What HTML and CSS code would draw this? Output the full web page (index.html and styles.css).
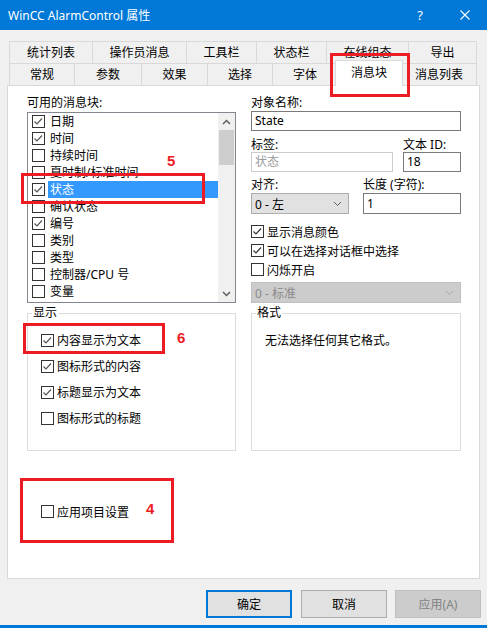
FILE: index.html
```html
<!DOCTYPE html>
<html>
<head>
<meta charset="utf-8">
<title>WinCC AlarmControl 属性</title>
<link rel="stylesheet" href="styles.css">
</head>
<body>
<div class="titlebar">
  <span class="title">WinCC AlarmControl 属性</span>
  <span class="help">?</span>
  <svg class="close" width="10" height="10" viewBox="0 0 10 10"><path d="M0.5 0.5 L9.5 9.5 M9.5 0.5 L0.5 9.5" stroke="#fff" stroke-width="1.1"/></svg>
</div>

<div class="tabs">
  <div class="tabrow">
    <div class="tab w83">统计列表</div>
    <div class="tab w94">操作员消息</div>
    <div class="tab w70">工具栏</div>
    <div class="tab w70">状态栏</div>
    <div class="tab w82">在线组态</div>
    <div class="tab w69">导出</div>
  </div>
  <div class="tabrow row2">
    <div class="tab w65">常规</div>
    <div class="tab w67">参数</div>
    <div class="tab w66">效果</div>
    <div class="tab w65">选择</div>
    <div class="tab w65">字体</div>
    <div class="tab sel">消息块</div>
    <div class="tab w76">消息列表</div>
  </div>
</div>

<div class="panel">
  <div class="cols">
    <div class="col">
      <div class="lbl">可用的消息块:</div>
      <div class="list">
        <div class="items">
          <div class="item"><svg class="cb" width="13" height="13" viewBox="0 0 13 13"><rect x="0.5" y="0.5" width="12" height="12" fill="#fff" stroke="#333"/><path d="M2.5 6.5 L5 9 L10 3.5" fill="none" stroke="#555" stroke-width="1.2"/></svg><span class="txt">日期</span></div>
          <div class="item"><svg class="cb" width="13" height="13" viewBox="0 0 13 13"><rect x="0.5" y="0.5" width="12" height="12" fill="#fff" stroke="#333"/><path d="M2.5 6.5 L5 9 L10 3.5" fill="none" stroke="#555" stroke-width="1.2"/></svg><span class="txt">时间</span></div>
          <div class="item"><svg class="cb" width="13" height="13" viewBox="0 0 13 13"><rect x="0.5" y="0.5" width="12" height="12" fill="#fff" stroke="#333"/></svg><span class="txt">持续时间</span></div>
          <div class="item"><svg class="cb" width="13" height="13" viewBox="0 0 13 13"><rect x="0.5" y="0.5" width="12" height="12" fill="#fff" stroke="#333"/></svg><span class="txt">夏时制/标准时间</span></div>
          <div class="item sel"><svg class="cb" width="13" height="13" viewBox="0 0 13 13"><rect x="0.5" y="0.5" width="12" height="12" fill="#fff" stroke="#333"/><path d="M2.5 6.5 L5 9 L10 3.5" fill="none" stroke="#555" stroke-width="1.2"/></svg><span class="txt">状态</span></div>
          <div class="item"><svg class="cb" width="13" height="13" viewBox="0 0 13 13"><rect x="0.5" y="0.5" width="12" height="12" fill="#fff" stroke="#333"/></svg><span class="txt">确认状态</span></div>
          <div class="item"><svg class="cb" width="13" height="13" viewBox="0 0 13 13"><rect x="0.5" y="0.5" width="12" height="12" fill="#fff" stroke="#333"/><path d="M2.5 6.5 L5 9 L10 3.5" fill="none" stroke="#555" stroke-width="1.2"/></svg><span class="txt">编号</span></div>
          <div class="item"><svg class="cb" width="13" height="13" viewBox="0 0 13 13"><rect x="0.5" y="0.5" width="12" height="12" fill="#fff" stroke="#333"/></svg><span class="txt">类别</span></div>
          <div class="item"><svg class="cb" width="13" height="13" viewBox="0 0 13 13"><rect x="0.5" y="0.5" width="12" height="12" fill="#fff" stroke="#333"/></svg><span class="txt">类型</span></div>
          <div class="item"><svg class="cb" width="13" height="13" viewBox="0 0 13 13"><rect x="0.5" y="0.5" width="12" height="12" fill="#fff" stroke="#333"/></svg><span class="txt">控制器/CPU 号</span></div>
          <div class="item"><svg class="cb" width="13" height="13" viewBox="0 0 13 13"><rect x="0.5" y="0.5" width="12" height="12" fill="#fff" stroke="#333"/></svg><span class="txt">变量</span></div>
        </div>
        <div class="scroll">
          <div class="arrow"><svg width="9" height="6" viewBox="0 0 9 6"><path d="M1 5 L4.5 1.5 L8 5" fill="none" stroke="#606060" stroke-width="1.5"/></svg></div>
          <div class="thumb"></div>
          <div class="track"></div>
          <div class="arrow"><svg width="9" height="6" viewBox="0 0 9 6"><path d="M1 1 L4.5 4.5 L8 1" fill="none" stroke="#606060" stroke-width="1.5"/></svg></div>
        </div>
      </div>
      <fieldset class="group">
        <legend>显示</legend>
        <div class="gbody">
          <div class="grow"><svg class="cb" width="13" height="13" viewBox="0 0 13 13"><rect x="0.5" y="0.5" width="12" height="12" fill="#fff" stroke="#333"/><path d="M2.5 6.5 L5 9 L10 3.5" fill="none" stroke="#555" stroke-width="1.2"/></svg><span class="ctxt">内容显示为文本</span></div>
          <div class="grow"><svg class="cb" width="13" height="13" viewBox="0 0 13 13"><rect x="0.5" y="0.5" width="12" height="12" fill="#fff" stroke="#333"/><path d="M2.5 6.5 L5 9 L10 3.5" fill="none" stroke="#555" stroke-width="1.2"/></svg><span class="ctxt">图标形式的内容</span></div>
          <div class="grow"><svg class="cb" width="13" height="13" viewBox="0 0 13 13"><rect x="0.5" y="0.5" width="12" height="12" fill="#fff" stroke="#333"/><path d="M2.5 6.5 L5 9 L10 3.5" fill="none" stroke="#555" stroke-width="1.2"/></svg><span class="ctxt">标题显示为文本</span></div>
          <div class="grow"><svg class="cb" width="13" height="13" viewBox="0 0 13 13"><rect x="0.5" y="0.5" width="12" height="12" fill="#fff" stroke="#333"/></svg><span class="ctxt">图标形式的标题</span></div>
        </div>
      </fieldset>
    </div>

    <div class="col">
      <div class="lbl">对象名称:</div>
      <div class="input mt1">State</div>
      <div class="pair mt7">
        <div class="w142">
          <div class="lbl">标签:</div>
          <div class="input disabled">状态</div>
        </div>
        <div class="w57">
          <div class="lbl">文本 ID:</div>
          <div class="input">18</div>
        </div>
      </div>
      <div class="pair mt6">
        <div class="w98">
          <div class="lbl">对齐:</div>
          <div class="select mt1"><span>0 - 左</span><svg width="9" height="6" viewBox="0 0 9 6"><path d="M1 1 L4.5 4.5 L8 1" fill="none" stroke="#606060" stroke-width="1"/></svg></div>
        </div>
        <div class="w97">
          <div class="lbl">长度 (字符):</div>
          <div class="input h21 mt1">1</div>
        </div>
      </div>
      <div class="checks">
        <div class="crow"><svg class="cb" width="13" height="13" viewBox="0 0 13 13"><rect x="0.5" y="0.5" width="12" height="12" fill="#fff" stroke="#333"/><path d="M2.5 6.5 L5 9 L10 3.5" fill="none" stroke="#333" stroke-width="1.2"/></svg><span class="ctxt">显示消息颜色</span></div>
        <div class="crow"><svg class="cb" width="13" height="13" viewBox="0 0 13 13"><rect x="0.5" y="0.5" width="12" height="12" fill="#fff" stroke="#333"/><path d="M2.5 6.5 L5 9 L10 3.5" fill="none" stroke="#333" stroke-width="1.2"/></svg><span class="ctxt">可以在选择对话框中选择</span></div>
        <div class="crow"><svg class="cb" width="13" height="13" viewBox="0 0 13 13"><rect x="0.5" y="0.5" width="12" height="12" fill="#fff" stroke="#333"/></svg><span class="ctxt">闪烁开启</span></div>
      </div>
      <div class="select disabled mt3"><span>0 - 标准</span><svg width="9" height="6" viewBox="0 0 9 6"><path d="M1 1 L4.5 4.5 L8 1" fill="none" stroke="#a8a8a8" stroke-width="1"/></svg></div>
      <fieldset class="group">
        <legend>格式</legend>
        <div class="gbody">
          <div class="grow">无法选择任何其它格式。</div>
        </div>
      </fieldset>
    </div>
  </div>

  <div class="project"><svg class="cb" width="13" height="13" viewBox="0 0 13 13"><rect x="0.5" y="0.5" width="12" height="12" fill="#fff" stroke="#333"/></svg><span class="ctxt">应用项目设置</span></div>
</div>

<div class="buttons">
  <div class="btn ok">确定</div>
  <div class="btn">取消</div>
  <div class="btn off">应用(A)</div>
</div>

<div class="mark m-tab"></div>
<div class="mark m5"></div>
<div class="mark m6"></div>
<div class="mark m4"></div>
<div class="num n5">5</div>
<div class="num n6">6</div>
<div class="num n4">4</div>
</body>
</html>
```

FILE: styles.css
```css
* { box-sizing: border-box; }
html, body { margin: 0; padding: 0; }
body {
  width: 487px;
  height: 628px;
  background: #f0f0f0;
  font-family: "Noto Sans", "Noto Sans CJK SC", sans-serif;
  font-size: 12px;
  color: #000;
  position: relative;
  overflow: hidden;
  border-bottom: 3px solid #0078d7;
}

.titlebar {
  height: 30px;
  background: #0078d7;
  color: #fff;
  display: flex;
  align-items: center;
  padding-left: 8px;
}
.title { flex: 1; font-size: 12px; }
.help { font-size: 13px; margin-right: 37px; }
.close { margin-right: 17px; display: block; }

.tabs { margin-top: 11px; padding-left: 9px; }
.tabrow { display: flex; height: 22px; }
.row2 { align-items: flex-end; }
.tab {
  height: 22px;
  border-top: 1px solid #d9d9d9;
  border-left: 1px solid #d9d9d9;
  display: flex;
  align-items: center;
  justify-content: center;
  background: #f0f0f0;
  line-height: 14px;
  white-space: nowrap;
}
.tab:last-child { border-right: 1px solid #d9d9d9; }
.tab.sel {
  width: 68px;
  height: 26px;
  margin: -3px -2px -1px -2px;
  background: #fff;
  border: 1px solid #d9d9d9;
  border-bottom: none;
  position: relative;
  z-index: 1;
  padding-bottom: 1px;
}
.w83 { width: 83px; }
.w94 { width: 94px; }
.w70 { width: 70px; }
.w82 { width: 82px; }
.w69 { width: 69px; }
.w65 { width: 65px; }
.w67 { width: 67px; }
.w66 { width: 66px; }
.w76 { width: 76px; }

.panel {
  margin-left: 7px;
  width: 473px;
  height: 494px;
  background: #fff;
  border: 1px solid #d9d9d9;
  padding: 10px 0 0 19px;
}
.cols {
  display: grid;
  grid-template-columns: 209px 210px;
  column-gap: 15px;
}
.col { display: flex; flex-direction: column; }
.lbl { height: 14px; line-height: 14px; white-space: nowrap; }

.list {
  margin-top: 2px;
  height: 191px;
  border: 1px solid #828790;
  display: flex;
}
.items { flex: 1; }
.item { height: 17px; display: flex; align-items: center; padding-left: 4px; }
.cb { display: block; flex: none; }
.item .txt {
  margin-left: 3px;
  padding: 0 2px;
  height: 17px;
  line-height: 17px;
  flex: 1;
  white-space: nowrap;
}
.item.sel .txt { background: #3399ff; color: #fff; }
.scroll { width: 17px; background: #f0f0f0; display: flex; flex-direction: column; }
.arrow { height: 17px; display: flex; align-items: center; justify-content: center; }
.arrow svg { display: block; }
.thumb { height: 35px; margin: 0 1px; background: #cdcdcd; }
.track { flex: 1; }

.group {
  margin: 3px 0 0 0;
  padding: 0;
  border: 1px solid #dcdcdc;
  height: 145px;
  min-width: 0;
}
.group legend { padding: 0 1px; margin-left: 4px; line-height: 14px; }
.gbody { padding: 7px 0 0 13px; }
.grow { height: 26px; display: flex; align-items: center; white-space: nowrap; }
.ctxt { margin-left: 3px; white-space: nowrap; }

.mt1 { margin-top: 1px; }
.mt3 { margin-top: 3px; }
.mt6 { margin-top: 6px; }
.mt7 { margin-top: 7px; }
.pair { display: flex; justify-content: space-between; }
.w142 { width: 142px; }
.w57 { width: 58px; }
.w98 { width: 98px; }
.w97 { width: 98px; }

.input {
  height: 20px;
  border: 1px solid #7a7a7a;
  background: #fff;
  padding-left: 3px;
  line-height: 18px;
  white-space: nowrap;
}
.input.disabled { border-color: #cccccc; color: #9a9a9a; }
.h21 { height: 21px; line-height: 19px; }
.select {
  height: 21px;
  border: 1px solid #adadad;
  background: #e1e1e1;
  padding: 0 6px 0 3px;
  display: flex;
  align-items: center;
  justify-content: space-between;
  white-space: nowrap;
}
.select svg { display: block; }
.select.disabled { background: #cccccc; border-color: #bfbfbf; color: #8a8a8a; }

.checks { margin-top: 8px; }
.crow { height: 19px; display: flex; align-items: center; }

.project {
  margin-top: 51px;
  padding-left: 14px;
  height: 19px;
  display: flex;
  align-items: center;
}

.buttons {
  display: flex;
  justify-content: flex-end;
  gap: 8px;
  margin-top: 11px;
  padding-right: 6px;
}
.btn {
  width: 86px;
  height: 28px;
  border: 1px solid #adadad;
  background: #e1e1e1;
  display: flex;
  align-items: center;
  justify-content: center;
}
.btn.ok { border: 2px solid #0078d7; margin-right: 1px; }
.btn.off { background: #cccccc; border-color: #bfbfbf; color: #838383; }

.mark { position: absolute; border: 3px solid #ec1c24; }
.m-tab { left: 330px; top: 53px; width: 80px; height: 44px; z-index: 2; }
.m5 { left: 21px; top: 173px; width: 184px; height: 31px; }
.m6 { left: 23px; top: 323px; width: 142px; height: 31px; }
.m4 { left: 20px; top: 478px; width: 154px; height: 65px; }
.num {
  position: absolute;
  color: #ec1c24;
  font-family: "Liberation Sans", sans-serif;
  font-weight: bold;
  font-size: 15px;
  line-height: 15px;
}
.n5 { left: 167px; top: 153px; }
.n6 { left: 177px; top: 330px; }
.n4 { left: 146px; top: 501px; }
```
